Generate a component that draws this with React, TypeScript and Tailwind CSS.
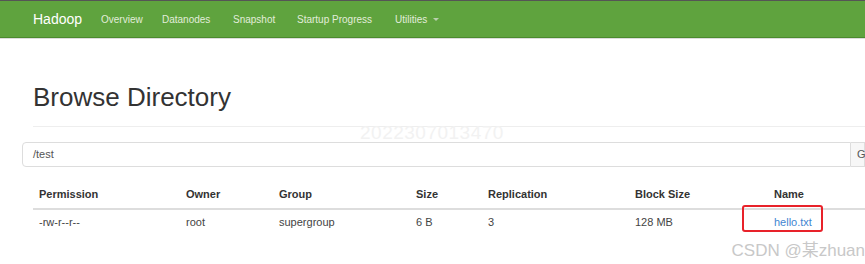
const navItems = [
  { label: "Overview", w: "w-[61px]" },
  { label: "Datanodes", w: "w-[71px]" },
  { label: "Snapshot", w: "w-[64px]" },
  { label: "Startup Progress", w: "w-[98px]" },
];

const columns = [
  { label: "Permission", w: "w-[147px]", value: "-rw-r--r--" },
  { label: "Owner", w: "w-[93px]", value: "root" },
  { label: "Group", w: "w-[137px]", value: "supergroup" },
  { label: "Size", w: "w-[72px]", value: "6 B" },
  { label: "Replication", w: "w-[147px]", value: "3" },
  { label: "Block Size", w: "w-[139px]", value: "128 MB" },
];

export default function App() {
  return (
    <div className="w-[865px] h-[264px] overflow-hidden bg-white font-['Liberation_Sans',Arial,sans-serif] text-[#333] relative">
      {/* navbar */}
      <div className="border-t border-[#555] bg-[#5fa33e] border-b border-b-[#4b8a2e] h-[38px] flex items-center pl-[33px]">
        <span className="text-white text-[14px] w-[68px]">Hadoop</span>
        {navItems.map((item) => (
          <span key={item.label} className={`${item.w} text-[#e2edda] text-[10px] whitespace-nowrap`}>
            {item.label}
          </span>
        ))}
        <span className="text-[#e2edda] text-[10px] flex items-center gap-[6px]">
          Utilities
          <span className="w-0 h-0 border-l-[3px] border-r-[3px] border-t-[3px] border-l-transparent border-r-transparent border-t-[#b9cfae]" />
        </span>
      </div>
      <div className="h-px bg-[#dcdcdc]" />

      <div className="pl-[33px] pt-[43px]">
        <h1 className="text-[26px] leading-[30px] text-[#333]">Browse Directory</h1>
        <div className="mt-[14px] h-px bg-[#eee]" />
      </div>

      {/* faint watermark */}
      <div className="absolute left-[360px] top-[119px] text-[19px] text-[#f2f2f2] tracking-[0.5px]">2022307013470</div>

      {/* path input */}
      <div className="ml-[22px] mt-[15px] flex h-[25px]">
        <div className="flex-1 border border-[#ddd] rounded-l-[4px] flex items-center pl-[10px] text-[11px] text-[#555]">
          /test
        </div>
        <div className="w-[14px] border border-l-0 border-[#ddd] bg-[#f7f7f7] flex items-center pl-[6px] text-[11px] text-[#555]">
          G
        </div>
      </div>

      {/* table */}
      <div className="ml-[33px] mt-[15px] text-[11px]">
        <div className="flex h-[28px] pt-[6px] items-start leading-[13px] border-b-2 border-[#ddd] font-bold">
          {columns.map((c) => (
            <div key={c.label} className={`${c.w} pl-[6px]`}>
              {c.label}
            </div>
          ))}
          <div className="pl-[6px]">Name</div>
        </div>
        <div className="flex h-[24px] items-center text-[#444]">
          {columns.map((c) => (
            <div key={c.label} className={`${c.w} pl-[6px]`}>
              {c.value}
            </div>
          ))}
          <div className="pl-[6px] text-[#3f86d1]">hello.txt</div>
        </div>
      </div>

      {/* highlight box */}
      <div className="absolute left-[742px] top-[205px] w-[81px] h-[27px] border-2 border-[#e8222a] rounded-[3px]" />

      <div className="absolute right-[0px] top-[238px] text-[17px] text-[#c8c8c8] font-['Liberation_Sans','Noto_Sans_CJK_SC',sans-serif] whitespace-nowrap">
        CSDN @某zhuan
      </div>
    </div>
  );
}
